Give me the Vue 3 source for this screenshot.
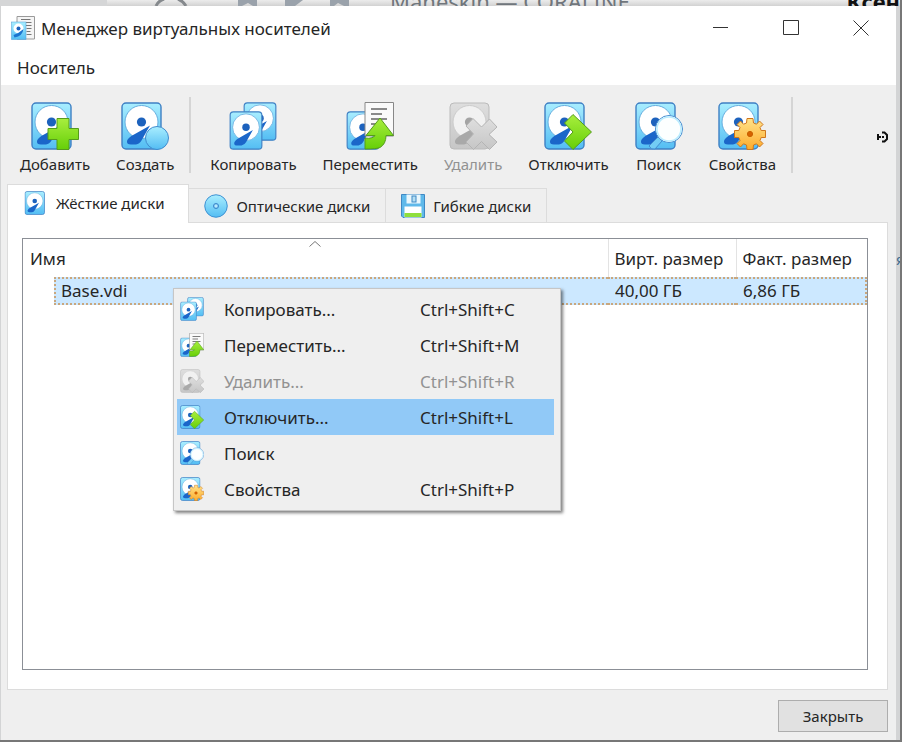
<script setup>
import { ref } from 'vue'

const tools = [
  { label: 'Добавить', icon: 'add' },
  { label: 'Создать', icon: 'create', divider: true },
  { label: 'Копировать', icon: 'copy' },
  { label: 'Переместить', icon: 'move' },
  { label: 'Удалить', icon: 'remove', disabled: true },
  { label: 'Отключить', icon: 'release' },
  { label: 'Поиск', icon: 'search' },
  { label: 'Свойства', icon: 'settings', divider: true }
]

const tabs = [
  { id: 'hdd', label: 'Жёсткие диски', icon: 'hdd' },
  { id: 'cd', label: 'Оптические диски', icon: 'cd' },
  { id: 'fd', label: 'Гибкие диски', icon: 'floppy' }
]

const menu = [
  { label: 'Копировать...', icon: 'copy', keys: 'Ctrl+Shift+C' },
  { label: 'Переместить...', icon: 'move', keys: 'Ctrl+Shift+M' },
  { label: 'Удалить...', icon: 'remove', keys: 'Ctrl+Shift+R', disabled: true },
  { label: 'Отключить...', icon: 'release', keys: 'Ctrl+Shift+L' },
  { label: 'Поиск', icon: 'search', keys: '' },
  { label: 'Свойства', icon: 'settings', keys: 'Ctrl+Shift+P' }
]

const media = [{ name: 'Base.vdi', virtual: '40,00 ГБ', actual: '6,86 ГБ' }]

const activeTab = ref('hdd')
const hovered = ref('release')
</script>

<template>
  <div class="desktop">
    <svg class="defs" aria-hidden="true">
      <defs>
        <linearGradient id="g-blue" x1="0" y1="0" x2="0" y2="1">
          <stop offset="0" stop-color="#a9eeff" />
          <stop offset="1" stop-color="#53bdf3" />
        </linearGradient>
        <linearGradient id="g-green" x1="0" y1="0" x2="0" y2="1">
          <stop offset="0" stop-color="#a8ee3e" />
          <stop offset="1" stop-color="#66cf08" />
        </linearGradient>
        <linearGradient id="g-gold" x1="0" y1="0" x2="0" y2="1">
          <stop offset="0" stop-color="#ffe38a" />
          <stop offset="1" stop-color="#fdab2c" />
        </linearGradient>
        <linearGradient id="g-grey" x1="0" y1="0" x2="0" y2="1">
          <stop offset="0" stop-color="#dedede" />
          <stop offset="1" stop-color="#c6c6c6" />
        </linearGradient>
        <symbol id="disk" viewBox="0 0 41 48">
          <rect x="1" y="1" width="39" height="46" rx="4" fill="url(#g-blue)" stroke="#3f80c4" stroke-width="1.4" />
          <circle cx="20.500" cy="20" r="16.500" fill="#fff" stroke="#65aedf" />
          <circle cx="20.500" cy="20" r="4.600" fill="#1d62bd" />
          <path d="M29 23.500L13 32.500Q7 35.500 6 39Q5.500 42.500 10 42.500H15Q18.500 42 20.500 38.500Z" fill="#1b66c9" />
        </symbol>
        <symbol id="i-hdd" viewBox="0 0 48 48"><use href="#disk" x="1" width="41" height="48" /></symbol>
        <symbol id="i-add" viewBox="0 0 48 48">
          <use href="#disk" width="41" height="48" />
          <path d="M26 16.500H38V26.500H47.500V37.500H38V47.500H26V37.500H17V26.500H26Z" fill="url(#g-green)" stroke="#559b1d" />
        </symbol>
        <symbol id="i-create" viewBox="0 0 48 48">
          <use href="#disk" width="41" height="48" />
          <circle cx="36" cy="36" r="11.500" fill="url(#g-blue)" stroke="#418cce" />
        </symbol>
        <symbol id="i-copy" viewBox="0 0 48 48">
          <use href="#disk" x="14" width="34" height="39" />
          <use href="#disk" y="9" width="34" height="39" />
        </symbol>
        <symbol id="i-move" viewBox="0 0 48 48">
          <use href="#disk" y="9" width="34" height="39" />
          <path d="M19 .5H47.500V34H19Z" fill="#fafafa" stroke="#888" />
          <path d="M25 7H41M25 12H36M25 17H41M25 22H33" stroke="#656565" stroke-width="1.700" />
          <path d="M34 16 L47.500 33.500H40Q40 42 34 45.500Q31 47 19 47V36Q27 37 29 33.500H20Z" fill="url(#g-green)" stroke="#559b1d" />
        </symbol>
        <symbol id="i-remove" viewBox="0 0 48 48">
          <rect x="1" y="1" width="39" height="46" rx="4" fill="url(#g-grey)" stroke="#bbb" />
          <circle cx="20.500" cy="20" r="16.500" fill="#f1f1f1" stroke="#ccc" />
          <circle cx="20.500" cy="20" r="4.600" fill="#a4a4a4" />
          <path d="M29 23.500L13 32.500Q7 35.500 6 39Q5.500 42.500 10 42.500H15Q18.500 42 20.500 38.500Z" fill="#a9a9a9" />
          <path d="M24 16.500L32.500 25L40.500 17L48 25L40 32.500L48 40L40.500 47.500L32.500 39.500L24.500 47.500L17 40L24.500 32L17 24Z" fill="url(#g-grey)" stroke="#b4b4b4" />
        </symbol>
        <symbol id="i-release" viewBox="0 0 48 48">
          <use href="#disk" width="41" height="48" />
          <path d="M29 12.500L47.500 30L29 47.500L20.500 39L29 30L20.500 21Z" fill="url(#g-green)" stroke="#559b1d" />
        </symbol>
        <symbol id="i-search" viewBox="0 0 48 48">
          <use href="#disk" width="41" height="48" />
          <path d="M23 35L27 39L20 47Q16 48 14 44Z" fill="#73cdf4" stroke="#438cd0" />
          <circle cx="34" cy="27" r="13.500" fill="#fff" stroke="#438cd0" />
          <circle cx="34" cy="27" r="12" fill="#fcffff" stroke="#b9edff" stroke-width="1.500" />
        </symbol>
        <symbol id="i-settings" viewBox="0 0 48 48">
          <use href="#disk" width="41" height="48" />
          <g transform="translate(32 32)" fill="url(#g-gold)" stroke="#cf761c">
            <path d="M-3 -15.500H3L3.500 -11L6.500 -9.800L9.500 -13L13 -9.500L10 -6.500L11.200 -3.500H15.500V3.500H11.200L10 6.500L13 9.500L9.500 13L6.500 9.800L3.500 11L3 15.500H-3L-3.500 11L-6.500 9.800L-9.500 13L-13 9.500L-10 6.500L-11.200 3.500H-15.500V-3.500H-11.200L-10 -6.500L-13 -9.500L-9.500 -13L-6.500 -9.800L-3.500 -11Z" />
            <circle r="2.600" fill="#d76200" stroke="#c86000" />
          </g>
        </symbol>
        <symbol id="i-cd" viewBox="0 0 48 48">
          <circle cx="24" cy="24" r="22.500" fill="url(#g-blue)" stroke="#3f91d2" stroke-width="2" />
          <circle cx="24" cy="24" r="5" fill="#8fd6f8" stroke="#3a83c9" stroke-width="2" />
          <circle cx="24" cy="24" r="1.500" fill="#fff" />
        </symbol>
        <symbol id="i-floppy" viewBox="0 0 48 48">
          <path d="M1 1H47V47H4L1 44Z" fill="#5fb9ea" stroke="#3f88c4" stroke-width="2" />
          <rect x="11" y="1" width="28" height="18" fill="#e9f7fd" />
          <rect x="22" y="4" width="8" height="12" fill="#b5dff3" stroke="#3f88c4" stroke-width="2" />
          <rect x="7" y="25" width="34" height="22" fill="#fff" />
          <rect x="7" y="38" width="34" height="8" fill="#8fdf3c" />
        </symbol>
        <symbol id="i-app" viewBox="0 0 48 48">
          <path d="M12 1H47V46H12Z" fill="#f5f5f5" stroke="#9a9a9a" stroke-width="2" />
          <path d="M20 7H39M24 13H41M29 19H41M31 25H41M31 31H39M31 37H41" stroke="#777" stroke-width="2" />
          <rect x="1" y="12" width="29" height="35" fill="url(#g-blue)" stroke="#4a9ad5" />
          <circle cx="15" cy="25" r="10" fill="#fff" />
          <circle cx="15" cy="25" r="4" fill="#1d62bd" />
          <path d="M25 26Q23 41 7 43L5 38Q15 35 25 26Z" fill="#1b74cf" />
        </symbol>
      </defs>
    </svg>

    <div class="behind">
      <i class="block"></i>
      <svg class="shapes" viewBox="0 0 200 6" width="200" height="6" aria-hidden="true">
        <path d="M6 6Q8 1 14 -1M28 -1Q33 1 36 6" fill="none" stroke="#85898d" stroke-width="3" />
        <path d="M88 0H107V6H103L98 3L92 6H88ZM135 0H153L145 6H135ZM180 0H199V6H194L188 3L184 6H180Z" fill="#9aa2ab" />
      </svg>
      <span class="song">Maneskin — CORALINE</span>
      <span class="person">Ксен</span>
    </div>

    <main class="window">
      <header class="titlebar">
        <svg class="app-icon"><use href="#i-app" /></svg>
        <h1>Менеджер виртуальных носителей</h1>
        <div class="controls">
          <button type="button" aria-label="Свернуть">
            <svg viewBox="0 0 16 16"><path d="M0 7.500H15" /></svg>
          </button>
          <button type="button" aria-label="Развернуть">
            <svg viewBox="0 0 16 16"><path d="M.5 .5H15.500V14.500H.5Z" /></svg>
          </button>
          <button type="button" aria-label="Закрыть окно">
            <svg viewBox="0 0 16 16"><path d="M.5 .5L15.500 15.500M15.500 .5L.5 15.500" /></svg>
          </button>
        </div>
      </header>

      <nav class="menubar"><button type="button">Носитель</button></nav>

      <div class="toolbar" role="toolbar">
        <template v-for="t in tools" :key="t.icon">
          <button type="button" class="tool" :disabled="t.disabled">
            <svg><use :href="'#i-' + t.icon" /></svg>
            <span>{{ t.label }}</span>
          </button>
          <i v-if="t.divider" class="divider"></i>
        </template>
        <button type="button" class="more" aria-label="Ещё">
          <svg viewBox="0 0 12 12">
            <path d="M1 3V9M0 6H4M5 1.500H7.500L10 4V8L7.500 10.500H5M5 6H7" fill="none" stroke="#111" stroke-width="2" />
          </svg>
        </button>
      </div>

      <div class="tabs" role="tablist">
        <button
          v-for="t in tabs"
          :key="t.id"
          type="button"
          role="tab"
          class="tab"
          :class="{ active: activeTab === t.id }"
          :aria-selected="activeTab === t.id"
          @click="activeTab = t.id"
        >
          <svg><use :href="'#i-' + t.icon" /></svg>{{ t.label }}
        </button>
      </div>

      <section class="pane">
        <div class="list">
          <table>
            <thead>
              <tr>
                <th>
                  Имя
                  <svg class="sort" viewBox="0 0 12 6"><path d="M.5 5.500L6 .5L11.500 5.500" /></svg>
                </th>
                <th class="size">Вирт. размер</th>
                <th class="size">Факт. размер</th>
              </tr>
            </thead>
            <tbody>
              <tr v-for="m in media" :key="m.name">
                <td class="name"><div>{{ m.name }}</div></td>
                <td><div>{{ m.virtual }}</div></td>
                <td><div>{{ m.actual }}</div></td>
              </tr>
            </tbody>
          </table>
        </div>
      </section>

      <footer><button type="button" class="close">Закрыть</button></footer>

      <div class="context" role="menu">
        <button
          v-for="m in menu"
          :key="m.icon"
          type="button"
          role="menuitem"
          :disabled="m.disabled"
          :class="{ hover: hovered === m.icon }"
          @mouseenter="hovered = m.icon"
        >
          <svg><use :href="'#i-' + m.icon" /></svg>
          <span>{{ m.label }}</span>
          <kbd>{{ m.keys }}</kbd>
        </button>
      </div>
    </main>
    <span class="edge-text">я</span>
  </div>
</template>

<style>
body {
  background: #efefef;
}
</style>

<style scoped>
* {
  box-sizing: border-box;
}
.desktop {
  position: relative;
  display: flex;
  flex-direction: column;
  min-height: 100vh;
  overflow: hidden;
  font-family: "Noto Sans", "Open Sans", sans-serif;
  font-size: 17px;
  color: #262626;
  background: #d3d4d5;
  border-right: 2px solid #777;
  border-bottom: 2px solid #777;
}
.defs {
  position: absolute;
  width: 0;
  height: 0;
}
button {
  font: inherit;
  color: inherit;
  background: none;
  border: 0;
  padding: 0;
  margin: 0;
  white-space: nowrap;
}
.behind {
  display: flex;
  align-items: flex-end;
  height: 6px;
  overflow: hidden;
  background: linear-gradient(#ececec, #d2d2d2);
  line-height: 10px;
}
.block {
  width: 107px;
  height: 6px;
  background: #d5d6d7;
}
.shapes {
  flex: none;
  margin-left: 43px;
}
.song {
  margin-left: 40px;
  font-size: 22px;
  color: #70767c;
}
.person {
  margin-left: auto;
  font-size: 22px;
  font-weight: 700;
  color: #111;
}
.window {
  position: relative;
  flex: 1;
  display: flex;
  flex-direction: column;
  margin: 0 4px 0 1px;
  background: #efefef;
}
.titlebar {
  display: flex;
  align-items: center;
  height: 44px;
  padding-left: 10px;
  background: #fff;
}
.app-icon {
  width: 24px;
  height: 24px;
}
h1 {
  margin: 0 auto 0 6px;
  font-size: 17px;
  font-weight: 400;
  white-space: nowrap;
}
.controls {
  display: flex;
}
.controls button {
  display: grid;
  place-items: center;
  width: 70px;
  height: 44px;
}
.controls svg {
  width: 16px;
  height: 16px;
  fill: none;
  stroke: #333;
}
.menubar {
  display: flex;
  height: 35px;
  padding: 0 16px;
  background: #fff;
}
.toolbar {
  display: flex;
  align-items: flex-start;
  height: 99px;
  padding: 12px 4px 0 6px;
}
.tool {
  display: flex;
  flex-direction: column;
  align-items: center;
  padding: 5px 13px 0;
  font-size: 15px;
  line-height: 28px;
}
.tool svg {
  width: 48px;
  height: 48px;
}
.tool:disabled,
.context button:disabled {
  color: #929292;
}
.divider {
  width: 2px;
  height: 76px;
  margin: 0 6px 0 2px;
  background: #d5d5d5;
}
.more {
  display: grid;
  place-items: center;
  height: 80px;
  margin-left: auto;
  margin-right: 3px;
}
.more svg {
  display: block;
  width: 12px;
  height: 12px;
}
.tabs {
  position: relative;
  display: flex;
  align-items: flex-end;
  padding-left: 6px;
  font-size: 15px;
}
.tab {
  display: flex;
  align-items: center;
  gap: 8px;
  height: 34px;
  padding: 0 15px;
  border: 1px solid #dcdcdc;
  border-left: 0;
  border-bottom: 0;
}
.tab.active {
  height: 39px;
  padding: 0 24px 2px 16px;
  background: #fff;
  border-left: 1px solid #dcdcdc;
  margin-bottom: -1px;
}
.tab svg {
  width: 24px;
  height: 24px;
}
.pane {
  flex: 1;
  display: flex;
  margin: 0 8px 0 6px;
  padding: 15px 19px 19px 14px;
  background: #fff;
  border: 1px solid #dcdcdc;
}
.list {
  flex: 1;
  border: 1px solid #8b8f96;
}
table {
  width: 100%;
  table-layout: fixed;
  border-collapse: collapse;
  line-height: 24px;
}
th {
  position: relative;
  height: 38px;
  padding: 2px 0 0 7px;
  text-align: left;
  font-weight: 400;
  white-space: nowrap;
}
th.size {
  width: 128px;
  padding-left: 6px;
  border-left: 1px solid #e3e3e3;
}
th.size:last-child {
  width: 131px;
}
.sort {
  position: absolute;
  top: 2px;
  left: calc(50% - 6px);
  width: 12px;
  height: 6px;
  fill: none;
  stroke: #777;
}
td {
  padding: 0;
}
td div {
  height: 28px;
  padding-left: 7px;
  background: #cce8ff;
  border: dotted #c9a77e;
  border-width: 2px 0;
}
td.name {
  padding-left: 31px;
}
td.name div {
  padding-left: 5px;
  border-left-width: 2px;
}
td:last-child div {
  border-right-width: 2px;
}
footer {
  display: flex;
  justify-content: flex-end;
  padding: 10px 8px 8px;
}
.close {
  width: 110px;
  height: 32px;
  font-size: 15px;
  background: #e1e1e1;
  border: 1px solid #adadad;
}
.context {
  position: absolute;
  top: 282px;
  left: 172px;
  width: 388px;
  padding: 2px 6px 3px 3px;
  background: #efefef;
  border: 1px solid #c6c6c6;
  box-shadow: 2px 2px 3px rgba(0, 0, 0, 0.5);
}
.context button {
  display: flex;
  align-items: center;
  width: 100%;
  height: 36px;
  padding-left: 3px;
  text-align: left;
}
.context button.hover {
  background: #91c9f7;
}
.context svg {
  width: 24px;
  height: 24px;
  margin-right: 20px;
}
.context span {
  width: 196px;
}
kbd {
  font-family: inherit;
}
.edge-text {
  position: absolute;
  right: -3px;
  top: 250px;
  width: 7px;
  overflow: hidden;
  font-size: 14px;
  color: #426c8f;
}
</style>
